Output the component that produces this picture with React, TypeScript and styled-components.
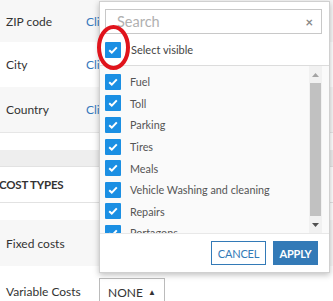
import React from "react";
import styled, { createGlobalStyle } from "styled-components";

const GlobalStyle = createGlobalStyle`
    html, body {
        margin: 0;
        padding: 0;
        background: #fff;
        font-family: Lato, "Open Sans", sans-serif;
        overflow: hidden;
    }
`

const Page = styled.div`
    position: relative;
    width: 333px;
    height: 301px;
    overflow: hidden;
    color: #333;
`

const Row = styled.div<{ $grey?: boolean; $h?: number }>`
    display: flex;
    align-items: center;
    height: ${p => p.$h || 45}px;
    padding-left: 6px;
    background: ${p => (p.$grey ? "#f7f7f7" : "#fff")};
    font-size: 12px;
    white-space: nowrap;
`

const Label = styled.div`
    width: 80px;
    flex: none;
`

const Link = styled.span`
    color: #3579bd;
`

const Gap = styled.div<{ $h: number; $line?: boolean }>`
    height: ${p => p.$h}px;
    border-top: ${p => (p.$line ? "1px solid #e6e6e6" : "none")};
`

const Band = styled.div`
    height: 16px;
    background: #eeeeee;
    border-bottom: 1px solid #e2e2e2;
`

const SectionHead = styled.div`
    height: 35px;
    display: flex;
    align-items: center;
    margin-left: -1px;
    font-size: 11.5px;
    font-weight: 700;
    letter-spacing: -0.2px;
    border-bottom: 1px solid #e2e2e2;
`

const FieldBox = styled.div`
    width: 70px;
    height: 40px;
    border: 1px solid #ccc;
    border-right: none;
    background: #fff;
    margin-left: 13px;
`

const NoneBtn = styled.div`
    display: flex;
    align-items: center;
    justify-content: space-between;
    box-sizing: border-box;
    width: 66px;
    height: 28px;
    padding: 0 8px 0 8px;
    margin-left: 13px;
    margin-top: 12px;
    border: 1px solid #bbb;
    font-size: 12px;
    color: #333;
    align-self: flex-start;
`

const Caret = styled.span`
    font-size: 8px;
    color: #333;
`

// dropdown lies over the page
const Panel = styled.div`
    position: absolute;
    left: 99px;
    top: 1px;
    width: 231px;
    height: 272px;
    box-sizing: border-box;
    background: #fff;
    border: 1px solid #d0d0d0;
    box-shadow: 0 2px 6px rgba(0,0,0,.25);
    display: flex;
    flex-direction: column;
`

const SearchBox = styled.div`
    display: flex;
    align-items: center;
    justify-content: space-between;
    box-sizing: border-box;
    margin: 7px 0 0 5px;
    width: 217px;
    height: 25px;
    padding: 0 8px 0 11px;
    border: 1px solid #c8c8c8;
    font-size: 14.5px;
    color: #b0b0b0;
`

const Clear = styled.span`
    font-size: 13px;
    font-weight: 700;
    color: #888;
`

const SelectRow = styled.div`
    display: flex;
    align-items: center;
    gap: 10px;
    height: 31px;
    padding-left: 5px;
    border-bottom: 1px solid #dcdcdc;
    font-size: 11px;
    color: #444;
`

const Box = styled.div`
    width: 16px;
    height: 16px;
    border-radius: 1px;
    background: #1b8fe3;
    display: flex;
    align-items: center;
    justify-content: center;
    flex: none;
`

const ListArea = styled.div`
    display: flex;
    height: 167px;
    background: #fafafa;
`

const Items = styled.div`
    flex: 1;
    overflow: hidden;
    padding-top: 5px;
`

const Item = styled.div`
    display: flex;
    align-items: center;
    gap: 9px;
    height: 21.6px;
    padding-left: 5px;
    font-size: 10.8px;
    color: #555;
    white-space: nowrap;
`

const Track = styled.div`
    width: 13px;
    margin-right: 7px;
    background: #f1f1f1;
    display: flex;
    flex-direction: column;
    align-items: stretch;
`

const Arrow = styled.div`
    height: 17px;
    display: flex;
    align-items: center;
    justify-content: center;
`

const Thumb = styled.div`
    flex: 1;
    background: #c1c1c1;
    margin: 0 1px;
`

const Footer = styled.div`
    flex: 1;
    display: flex;
    align-items: center;
    justify-content: flex-end;
    gap: 7px;
    padding-right: 11px;
    border-top: 1px solid #e8e8e8;
`

const Button = styled.div<{ $primary?: boolean }>`
    box-sizing: border-box;
    width: ${p => (p.$primary ? 45 : 55)}px;
    height: 24px;
    display: flex;
    align-items: center;
    justify-content: center;
    font-size: 11px;
    letter-spacing: -0.2px;
    border: 1px solid #337ab7;
    background: ${p => (p.$primary ? "#337ab7" : "#fff")};
    color: ${p => (p.$primary ? "#fff" : "#337ab7")};
    font-weight: ${p => (p.$primary ? 700 : 400)};
`

const Mark = styled.svg`
    position: absolute;
    left: 93px;
    top: 21px;
`

const Check = () => (
    <Box>
        <svg width="10" height="8" viewBox="0 0 10 8">
            <path d="M1.2 4.2 L3.8 6.6 L8.8 1.4" fill="none" stroke="#fff" strokeWidth="2" />
        </svg>
    </Box>
)

const costTypes = ["Fuel", "Toll", "Parking", "Tires", "Meals", "Vehicle Washing and cleaning", "Repairs", "Portagons"]

function App() {
    return (
        <Page>
            <GlobalStyle />
            <Row $grey $h={42}><Label>ZIP code</Label><Link>Click to set</Link></Row>
            <Row><Label>City</Label><Link>Click to set</Link></Row>
            <Row $grey><Label>Country</Label><Link>Click to set</Link></Row>
            <Gap $h={17} $line />
            <Band />
            <SectionHead>COST TYPES</SectionHead>
            <Gap $h={17} />
            <Row $grey $h={46}><Label>Fixed costs</Label><FieldBox /></Row>
            <Row $h={50}>
                <Label>Variable Costs</Label>
                <NoneBtn>NONE <Caret>▲</Caret></NoneBtn>
            </Row>

            <Panel>
                <SearchBox>Search<Clear>×</Clear></SearchBox>
                <SelectRow><Check />Select visible</SelectRow>
                <ListArea>
                    <Items>
                        {costTypes.map(t => (
                            <Item key={t}><Check />{t}</Item>
                        ))}
                    </Items>
                    <Track>
                        <Arrow>
                            <svg width="7" height="4" viewBox="0 0 7 4"><path d="M0 4 L3.5 0 L7 4 Z" fill="#a3a3a3" /></svg>
                        </Arrow>
                        <Thumb />
                        <Arrow>
                            <svg width="7" height="4" viewBox="0 0 7 4"><path d="M0 0 L3.5 4 L7 0 Z" fill="#505050" /></svg>
                        </Arrow>
                    </Track>
                </ListArea>
                <Footer>
                    <Button>CANCEL</Button>
                    <Button $primary>APPLY</Button>
                </Footer>
            </Panel>

            <Mark width="42" height="52" viewBox="0 0 42 52">
                <ellipse cx="20.5" cy="26.5" rx="14.5" ry="20.5" fill="none" stroke="#e0141c" strokeWidth="4" />
            </Mark>
        </Page>
    )
}

export default App
